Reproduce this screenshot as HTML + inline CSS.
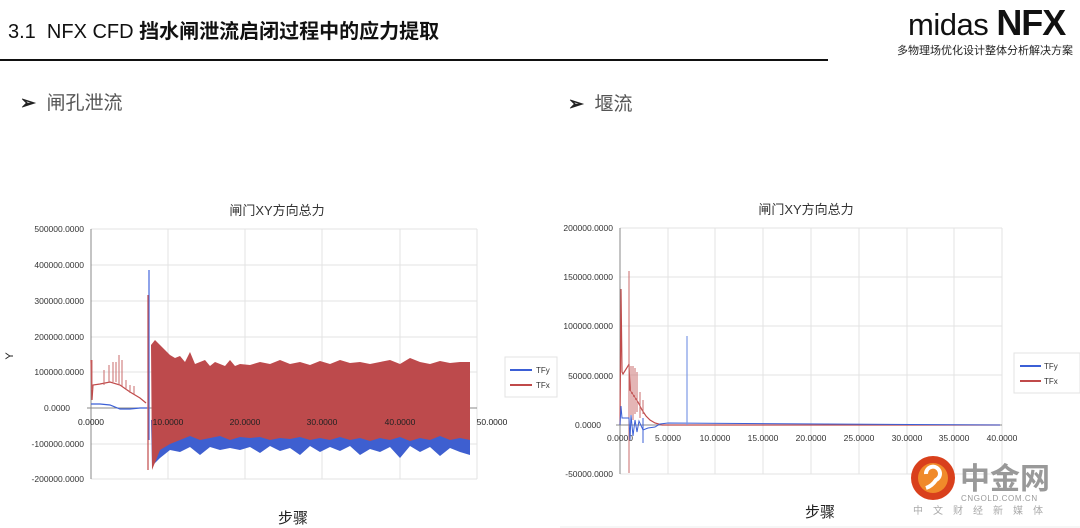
<!DOCTYPE html>
<html><head><meta charset="utf-8"><style>
html,body{margin:0;padding:0;background:#fff;width:1080px;height:528px;overflow:hidden;position:relative;font-family:"Liberation Sans","Noto Sans CJK SC",sans-serif}
.t{position:absolute;white-space:nowrap}
</style></head><body>
<div class="t" style="left:8px;top:15px;font-size:20px;color:#111"><span style="font-weight:normal">3.1&nbsp; NFX CFD </span><b>挡水闸泄流启闭过程中的应力提取</b></div>
<div style="position:absolute;left:0;top:59px;width:828px;height:2px;background:#111"></div>
<div class="t" style="left:908px;top:2px;font-size:31px;color:#111;letter-spacing:-0.5px">midas <b style="font-size:36px;letter-spacing:-1px">NFX</b></div>
<div class="t" style="left:897px;top:42px;font-size:11px;color:#222">多物理场优化设计整体分析解决方案</div>
<div class="t" style="left:20px;top:88px;font-size:19px;color:#555"><span style="color:#222;font-weight:bold">➢</span>&nbsp; 闸孔泄流</div>
<div class="t" style="left:568px;top:89px;font-size:19px;color:#555"><span style="color:#222;font-weight:bold">➢</span>&nbsp; 堰流</div>

<svg width="1080" height="528" style="position:absolute;left:0;top:0" font-family="Liberation Sans, Noto Sans CJK SC, sans-serif">
<!-- LEFT CHART -->
<text x="277" y="215" font-size="13" fill="#333" text-anchor="middle">闸门XY方向总力</text>
<g stroke="#e3e3e3" stroke-width="1">
<line x1="91" y1="229" x2="477" y2="229"/><line x1="91" y1="265" x2="477" y2="265"/><line x1="91" y1="301" x2="477" y2="301"/><line x1="91" y1="337" x2="477" y2="337"/><line x1="91" y1="372" x2="477" y2="372"/><line x1="91" y1="444" x2="477" y2="444"/><line x1="91" y1="479" x2="477" y2="479"/>
<line x1="168" y1="229" x2="168" y2="479"/><line x1="245" y1="229" x2="245" y2="479"/><line x1="322" y1="229" x2="322" y2="479"/><line x1="400" y1="229" x2="400" y2="479"/><line x1="477" y1="229" x2="477" y2="479"/>
</g>
<line x1="91" y1="229" x2="91" y2="479" stroke="#888"/>
<line x1="87" y1="408" x2="477" y2="408" stroke="#888"/>
<g font-size="8.5" fill="#333" text-anchor="end">
<text x="84" y="232">500000.0000</text><text x="84" y="268">400000.0000</text><text x="84" y="304">300000.0000</text><text x="84" y="340">200000.0000</text><text x="84" y="375">100000.0000</text><text x="70" y="411">0.0000</text><text x="84" y="447">-100000.0000</text><text x="84" y="482">-200000.0000</text>
</g>
<text x="13" y="356" font-size="11" fill="#222" transform="rotate(-90 13 356)" text-anchor="middle">Y</text>
<polyline points="91,360 92,400 93,385 100,384 110,382 120,385 130,392 140,398 146,403" fill="none" stroke="#c04a4a" stroke-width="1.2"/>
<path d="M92,360v30M104,370v15M109,365v18M113,362v20M116,362v20M119,355v30M122,360v26M126,380v10M130,385v8M134,386v8" stroke="#c96b6b" stroke-width="1"/>
<polyline points="91,404 100,404 110,405 120,409 130,409 140,408 147,408" fill="none" stroke="#3b5fd6" stroke-width="1.2"/>
<line x1="149" y1="270" x2="149" y2="440" stroke="#4466dd" stroke-width="1.2"/>
<line x1="148" y1="295" x2="148" y2="470" stroke="#c04a4a" stroke-width="1.2"/>
<polygon points="151,420 470,420 470,455 460,452 450,448 440,456 430,447 420,452 410,446 400,458 390,447 380,452 370,449 360,455 350,446 340,451 330,447 320,452 310,446 300,455 290,448 280,451 270,446 260,453 250,447 240,450 230,448 220,450 210,447 200,455 190,447 180,452 170,450 160,458 152,466" fill="#3e5fd0"/>
<polygon points="151,345 155,340 160,345 165,350 170,355 175,358 180,356 185,362 190,352 195,364 200,362 205,360 210,366 215,362 220,364 225,366 230,360 235,366 240,364 250,365 260,362 270,364 280,360 290,364 300,362 310,365 320,361 330,364 340,360 350,363 360,362 370,364 380,362 390,360 400,364 410,358 420,362 430,364 440,361 450,363 460,362 470,362 470,440 460,438 450,440 440,436 430,440 420,438 410,441 400,437 390,440 380,438 370,441 360,438 350,440 340,437 330,440 320,438 310,440 300,437 290,439 280,438 270,440 260,437 250,438 240,437 230,440 220,436 210,438 200,440 190,436 180,440 170,444 160,450 152,470" fill="#bd4a4c"/>
<g font-size="8.5" fill="#222" text-anchor="middle">
<text x="91" y="425">0.0000</text><text x="168" y="425">10.0000</text><text x="245" y="425">20.0000</text><text x="322" y="425">30.0000</text><text x="400" y="425">40.0000</text><text x="492" y="425">50.0000</text>
</g>
<rect x="505" y="357" width="52" height="40" fill="#fff" stroke="#e3e3e3"/>
<line x1="510" y1="370" x2="532" y2="370" stroke="#3b5fd6" stroke-width="2"/>
<line x1="510" y1="385" x2="532" y2="385" stroke="#c04a4a" stroke-width="2"/>
<text x="536" y="373" font-size="8" fill="#333">TFy</text><text x="536" y="388" font-size="8" fill="#333">TFx</text>
<text x="293" y="523" font-size="15" fill="#222" text-anchor="middle">步骤</text>

<!-- RIGHT CHART -->
<text x="806" y="214" font-size="13" fill="#333" text-anchor="middle">闸门XY方向总力</text>
<g stroke="#e3e3e3" stroke-width="1">
<line x1="620" y1="228" x2="1002" y2="228"/><line x1="620" y1="277" x2="1002" y2="277"/><line x1="620" y1="326" x2="1002" y2="326"/><line x1="620" y1="375" x2="1002" y2="375"/><line x1="620" y1="474" x2="1002" y2="474"/>
<line x1="668" y1="228" x2="668" y2="474"/><line x1="715" y1="228" x2="715" y2="474"/><line x1="763" y1="228" x2="763" y2="474"/><line x1="811" y1="228" x2="811" y2="474"/><line x1="859" y1="228" x2="859" y2="474"/><line x1="907" y1="228" x2="907" y2="474"/><line x1="954" y1="228" x2="954" y2="474"/><line x1="1002" y1="228" x2="1002" y2="474"/>
</g>
<line x1="620" y1="228" x2="620" y2="474" stroke="#888"/>
<line x1="616" y1="425" x2="1002" y2="425" stroke="#888"/>
<g font-size="8.5" fill="#333" text-anchor="end">
<text x="613" y="231">200000.0000</text><text x="613" y="280">150000.0000</text><text x="613" y="329">100000.0000</text><text x="613" y="379">50000.0000</text><text x="601" y="428">0.0000</text><text x="613" y="477">-50000.0000</text>
</g>
<g font-size="8.5" fill="#333" text-anchor="middle">
<text x="620" y="441">0.0000</text><text x="668" y="441">5.0000</text><text x="715" y="441">10.0000</text><text x="763" y="441">15.0000</text><text x="811" y="441">20.0000</text><text x="859" y="441">25.0000</text><text x="907" y="441">30.0000</text><text x="954" y="441">35.0000</text><text x="1002" y="441">40.0000</text>
</g>
<polyline points="620,425 621,289 622,372 623,374 628,366 629,364 630,390 634,396 638,402 642,410 646,416 650,420 655,423 662,425 1000,425" fill="none" stroke="#c04a4a" stroke-width="1.2"/>
<path d="M629,271v202M631,366v50M633,366v54M635,368v46M637,372v40M640,392v26M643,400v14" stroke="#c96b6b" stroke-width="1"/>
<polyline points="620,425 621,406 622,418 629,418 630,440 631,415 633,436 635,420 637,432 639,421 643,430 648,428 655,427 660,424 668,423 1000,425" fill="none" stroke="#3b5fd6" stroke-width="1"/>
<line x1="643" y1="418" x2="643" y2="443" stroke="#3b5fd6"/>
<line x1="687" y1="336" x2="687" y2="425" stroke="#7d98e6" stroke-width="1.2"/>
<rect x="1014" y="353" width="66" height="40" fill="#fff" stroke="#e3e3e3"/>
<line x1="1020" y1="366" x2="1041" y2="366" stroke="#3b5fd6" stroke-width="2"/>
<line x1="1020" y1="381" x2="1041" y2="381" stroke="#c04a4a" stroke-width="2"/>
<text x="1044" y="369" font-size="8" fill="#333">TFy</text><text x="1044" y="384" font-size="8" fill="#333">TFx</text>
<text x="820" y="517" font-size="15" fill="#222" text-anchor="middle">步骤</text>
<line x1="560" y1="527" x2="1080" y2="527" stroke="#eee"/>

<!-- watermark -->
<circle cx="933" cy="478" r="22" fill="#d9401c"/>
<circle cx="933" cy="478" r="15" fill="#f08a2a"/>
<path d="M926,474a7,7 0 1 1 10,6q-4,6 -10,8" fill="none" stroke="#fff" stroke-width="4"/>
<text x="960" y="489" font-size="30" font-weight="bold" fill="#999">中金网</text>
<text x="961" y="501" font-size="8" fill="#999" letter-spacing="0.6">CNGOLD.COM.CN</text>
<text x="913" y="514" font-size="10" fill="#aaa" letter-spacing="10">中文财经新媒体</text>
</svg>
</body></html>
